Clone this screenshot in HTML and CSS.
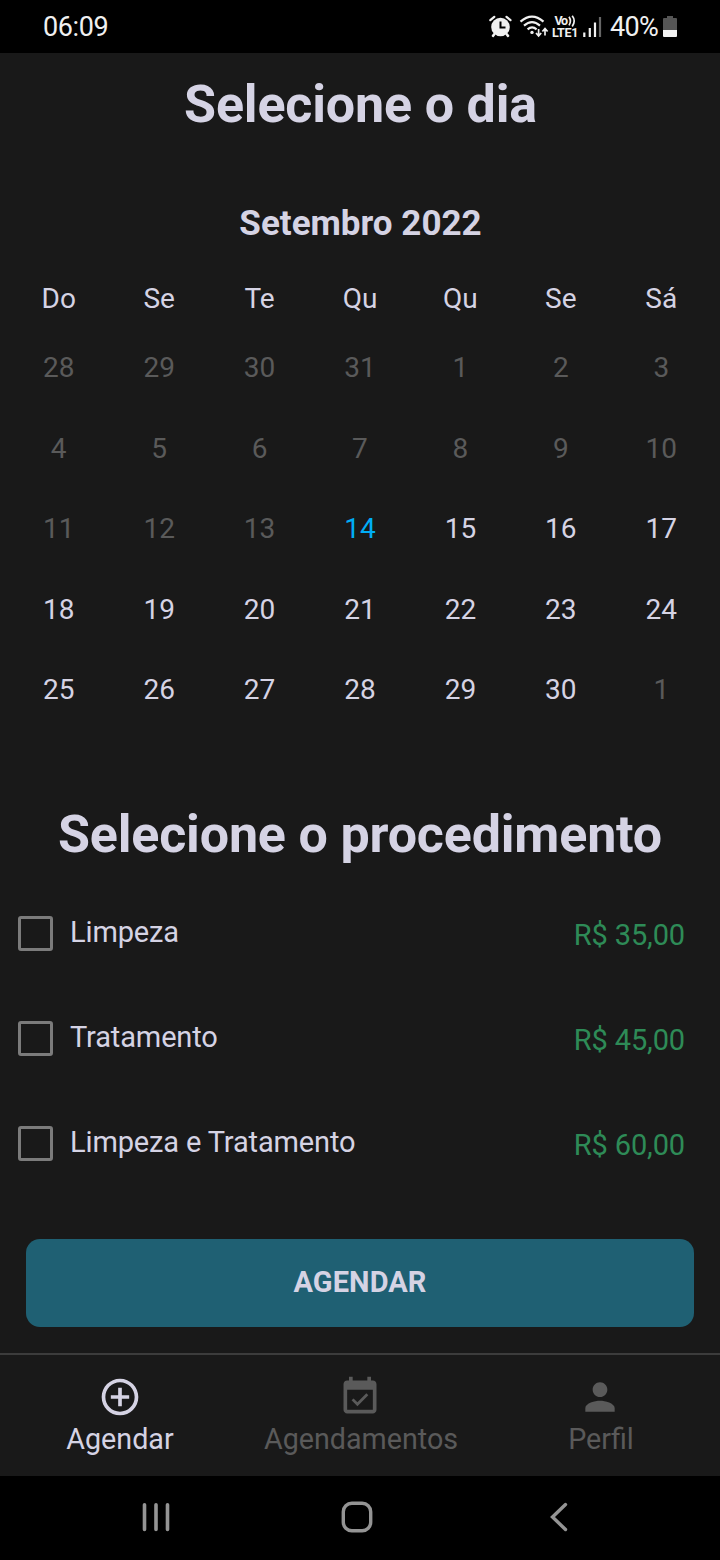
FILE: index.html
```html
<!DOCTYPE html>
<html lang="pt-BR">
<head>
<meta charset="utf-8">
<title>Agendar</title>
<link rel="stylesheet" href="styles.css">
</head>
<body>
<header class="status">
  <span class="clock">06:09</span>
  <svg class="status-icons" width="122" height="30" viewBox="488 12 122 30">
    <g fill="none" stroke="#f0f0f0" stroke-width="2" stroke-linecap="round">
      <path d="M490.3 20.2l4-3.4M510.5 20.2l-4-3.4" stroke-width="2.2"/>
      <path d="M494.5 34l-1.500 1.800M506.5 34l1.500 1.800" stroke-width="2.600"/>
    </g>
    <circle cx="500.5" cy="27" r="9.300" fill="#f0f0f0"/>
    <path d="M500.5 21.5v6h5" fill="none" stroke="#000" stroke-width="2"/>
    <g fill="none" stroke="#f0f0f0" stroke-width="2.2">
      <path d="M520.5 21.7q11.500-10 23 0"/>
      <path d="M524 25.600q8-7 16 0"/>
      <path d="M527.600 29.300q4.500-3.800 9 0"/>
    </g>
    <circle cx="532" cy="32.400" r="1.700" fill="#f0f0f0"/>
    <path d="M538.600 29v6.500M536 33l2.600 3 2.600-3M545 35.500v-6.500M542.400 31.500l2.600-3 2.600 3" fill="none" stroke="#f0f0f0" stroke-width="1.700"/>
    <text class="lte" x="554.500" y="25" textLength="13.500">Vo</text>
    <path d="M569 16.800q2.800 4.200 0 8.600M572.200 15.800q4 5.200 0 10.600" fill="none" stroke="#f0f0f0" stroke-width="1.700"/>
    <text class="lte" x="552" y="37" textLength="26.500">LTE1</text>
    <path d="M584.300 32.500v4.500M589.800 28v9M595 22.500v14.500" stroke="#f0f0f0" stroke-width="2.200"/>
    <path d="M600 17v20" stroke="#666" stroke-width="2.200"/>
  </svg>
  <span class="percent">40%</span>
  <svg class="battery" width="14" height="23" viewBox="0 0 14 23">
    <path d="M4 1h6v2h3q1 0 1 1v11H0V4q0-1 1-1h3z" fill="#555"/>
    <path d="M0 15h14v6q0 1-1 1H1q-1 0-1-1z" fill="#f2f2f2"/>
  </svg>
</header>
<main class="content">
  <h1 class="title">Selecione o dia</h1>
  <section class="calendar">
    <h2 class="month">Setembro 2022</h2>
    <div class="week"><span>Do</span><span>Se</span><span>Te</span><span>Qu</span><span>Qu</span><span>Se</span><span>Sá</span></div>
    <div class="days">
      <span class="off">28</span><span class="off">29</span><span class="off">30</span><span class="off">31</span><span class="off">1</span><span class="off">2</span><span class="off">3</span>
      <span class="off">4</span><span class="off">5</span><span class="off">6</span><span class="off">7</span><span class="off">8</span><span class="off">9</span><span class="off">10</span>
      <span class="off">11</span><span class="off">12</span><span class="off">13</span><span class="today">14</span><span>15</span><span>16</span><span>17</span>
      <span>18</span><span>19</span><span>20</span><span>21</span><span>22</span><span>23</span><span>24</span>
      <span>25</span><span>26</span><span>27</span><span>28</span><span>29</span><span>30</span><span class="off">1</span>
    </div>
  </section>
  <h1 class="title procedure-title">Selecione o procedimento</h1>
  <ul class="options">
    <li class="option"><i class="box"></i><span class="label">Limpeza</span><span class="price">R$ 35,00</span></li>
    <li class="option"><i class="box"></i><span class="label">Tratamento</span><span class="price">R$ 45,00</span></li>
    <li class="option"><i class="box"></i><span class="label">Limpeza e Tratamento</span><span class="price">R$ 60,00</span></li>
  </ul>
  <button class="submit">AGENDAR</button>
</main>
<nav class="tabs">
  <a class="tab active">
    <svg width="44" height="44" viewBox="0 0 24 24" fill="currentColor"><path d="M13 7h-2v4H7v2h4v4h2v-4h4v-2h-4V7zm-1-5C6.480 2 2 6.480 2 12s4.480 10 10 10 10-4.480 10-10S17.520 2 12 2zm0 18c-4.410 0-8-3.590-8-8s3.590-8 8-8 8 3.590 8 8-3.590 8-8 8z"/></svg>
    <span>Agendar</span>
  </a>
  <a class="tab">
    <svg width="44" height="44" viewBox="0 0 24 24" fill="currentColor"><path d="M16.530 11.060L15.470 10l-4.880 4.880-2.120-2.120-1.060 1.060L10.590 17l5.940-5.940zM19 3h-1V1h-2v2H8V1H6v2H5c-1.110 0-1.990.9-1.990 2L3 19c0 1.100.89 2 2 2h14c1.100 0 2-.9 2-2V5c0-1.100-.9-2-2-2zm0 16H5V8h14v11z"/></svg>
    <span class="tab-text">Agendamentos</span>
  </a>
  <a class="tab">
    <svg width="44" height="44" viewBox="0 0 24 24" fill="currentColor"><path d="M12 12c2.210 0 4-1.790 4-4s-1.790-4-4-4-4 1.790-4 4 1.790 4 4 4zm0 2c-2.670 0-8 1.340-8 4v2h16v-2c0-2.660-5.330-4-8-4z"/></svg>
    <span class="tab-text">Perfil</span>
  </a>
</nav>
<footer class="system">
  <svg width="28" height="30" viewBox="0 0 28 30" stroke="#949494" stroke-width="3.600" stroke-linecap="round"><path d="M2.500 2.800v24.600M14 2.800v24.600M25.500 2.800v24.600"/></svg>
  <svg class="home" width="32" height="32" viewBox="0 0 32 32" fill="none" stroke="#949494" stroke-width="3.400"><rect x="2.300" y="2.300" width="27.400" height="27.400" rx="8.500"/></svg>
  <svg width="18" height="30" viewBox="0 0 18 30" fill="none" stroke="#949494" stroke-width="3.400" stroke-linecap="round"><path d="M15.500 2.600L2.500 15l13 12.500"/></svg>
</footer>
</body>
</html>
```

FILE: styles.css
```css
* { box-sizing: border-box; }
body {
  margin: 0;
  width: 720px;
  height: 1560px;
  display: flex;
  flex-direction: column;
  overflow: hidden;
  background: #191919;
  color: #d5d3e4;
  font-family: Roboto, "Liberation Sans", sans-serif;
}
.status {
  height: 53px;
  background: #000;
  color: #f0f0f0;
  display: flex;
  align-items: center;
  padding: 0 43px 0 43px;
  font-size: 27px;
}
.clock { margin-right: auto; letter-spacing: -0.400px; }
.lte { font: bold 12.500px Roboto, sans-serif; fill: #f0f0f0; }
.percent { letter-spacing: -0.700px; margin-right: 5px; }
.content { height: 1300px; }
.title {
  margin: 0;
  padding: 22px 0 0 1px;
  font-size: 52px;
  line-height: 60px;
  font-weight: 700;
  letter-spacing: -0.170px;
  text-align: center;
}
.calendar { height: 670px; padding: 65px 8.500px 0; }
.month {
  margin: 0;
  padding-left: 1px;
  font-size: 35px;
  line-height: 48px;
  font-weight: 700;
  text-align: center;
}
.week, .days {
  display: grid;
  grid-template-columns: repeat(7, 1fr);
  text-align: center;
  font-size: 28px;
}
.week { padding-top: 31px; line-height: 40px; }
.days { padding-top: 9px; grid-auto-rows: 80.500px; line-height: 80.500px; }
.off { color: #5a5a5a; }
.today { color: #00adf5; }
.procedure-title { padding: 0; }
.options { list-style: none; margin: 16px 0 0; padding: 0 35px 0 18px; }
.option { height: 105px; display: flex; align-items: center; font-size: 29px; }
.box { width: 35px; height: 35px; border: 3px solid #7b7b7b; border-radius: 3px; }
.label { margin-left: 17px; padding-bottom: 4px; letter-spacing: -0.140px; }
.price { margin-left: auto; padding-top: 2px; color: #2e8b57; letter-spacing: -0.140px; }
.submit {
  display: block;
  width: 668px;
  height: 88px;
  margin: 43px 26px 0;
  padding: 0 0 2px;
  border: 0;
  border-radius: 14px;
  background: #1f6073;
  color: #d5d3e4;
  font: bold 29px Roboto, sans-serif;
  letter-spacing: 0.100px;
}
.tabs {
  height: 123px;
  border-top: 2px solid #3c3c3c;
  display: grid;
  grid-template-columns: repeat(3, 1fr);
}
.tab {
  display: flex;
  flex-direction: column;
  align-items: center;
  padding-top: 20px;
  color: #5a5a5a;
  font-size: 28.700px;
  line-height: 40px;
}
.tab-text { padding-left: 2px; }
.active { color: #d5d3e4; }
.system {
  height: 84px;
  background: #000;
  display: flex;
  align-items: center;
  justify-content: space-between;
  padding: 0 152px 2px 142px;
}
.home { margin-right: 6px; }
```
